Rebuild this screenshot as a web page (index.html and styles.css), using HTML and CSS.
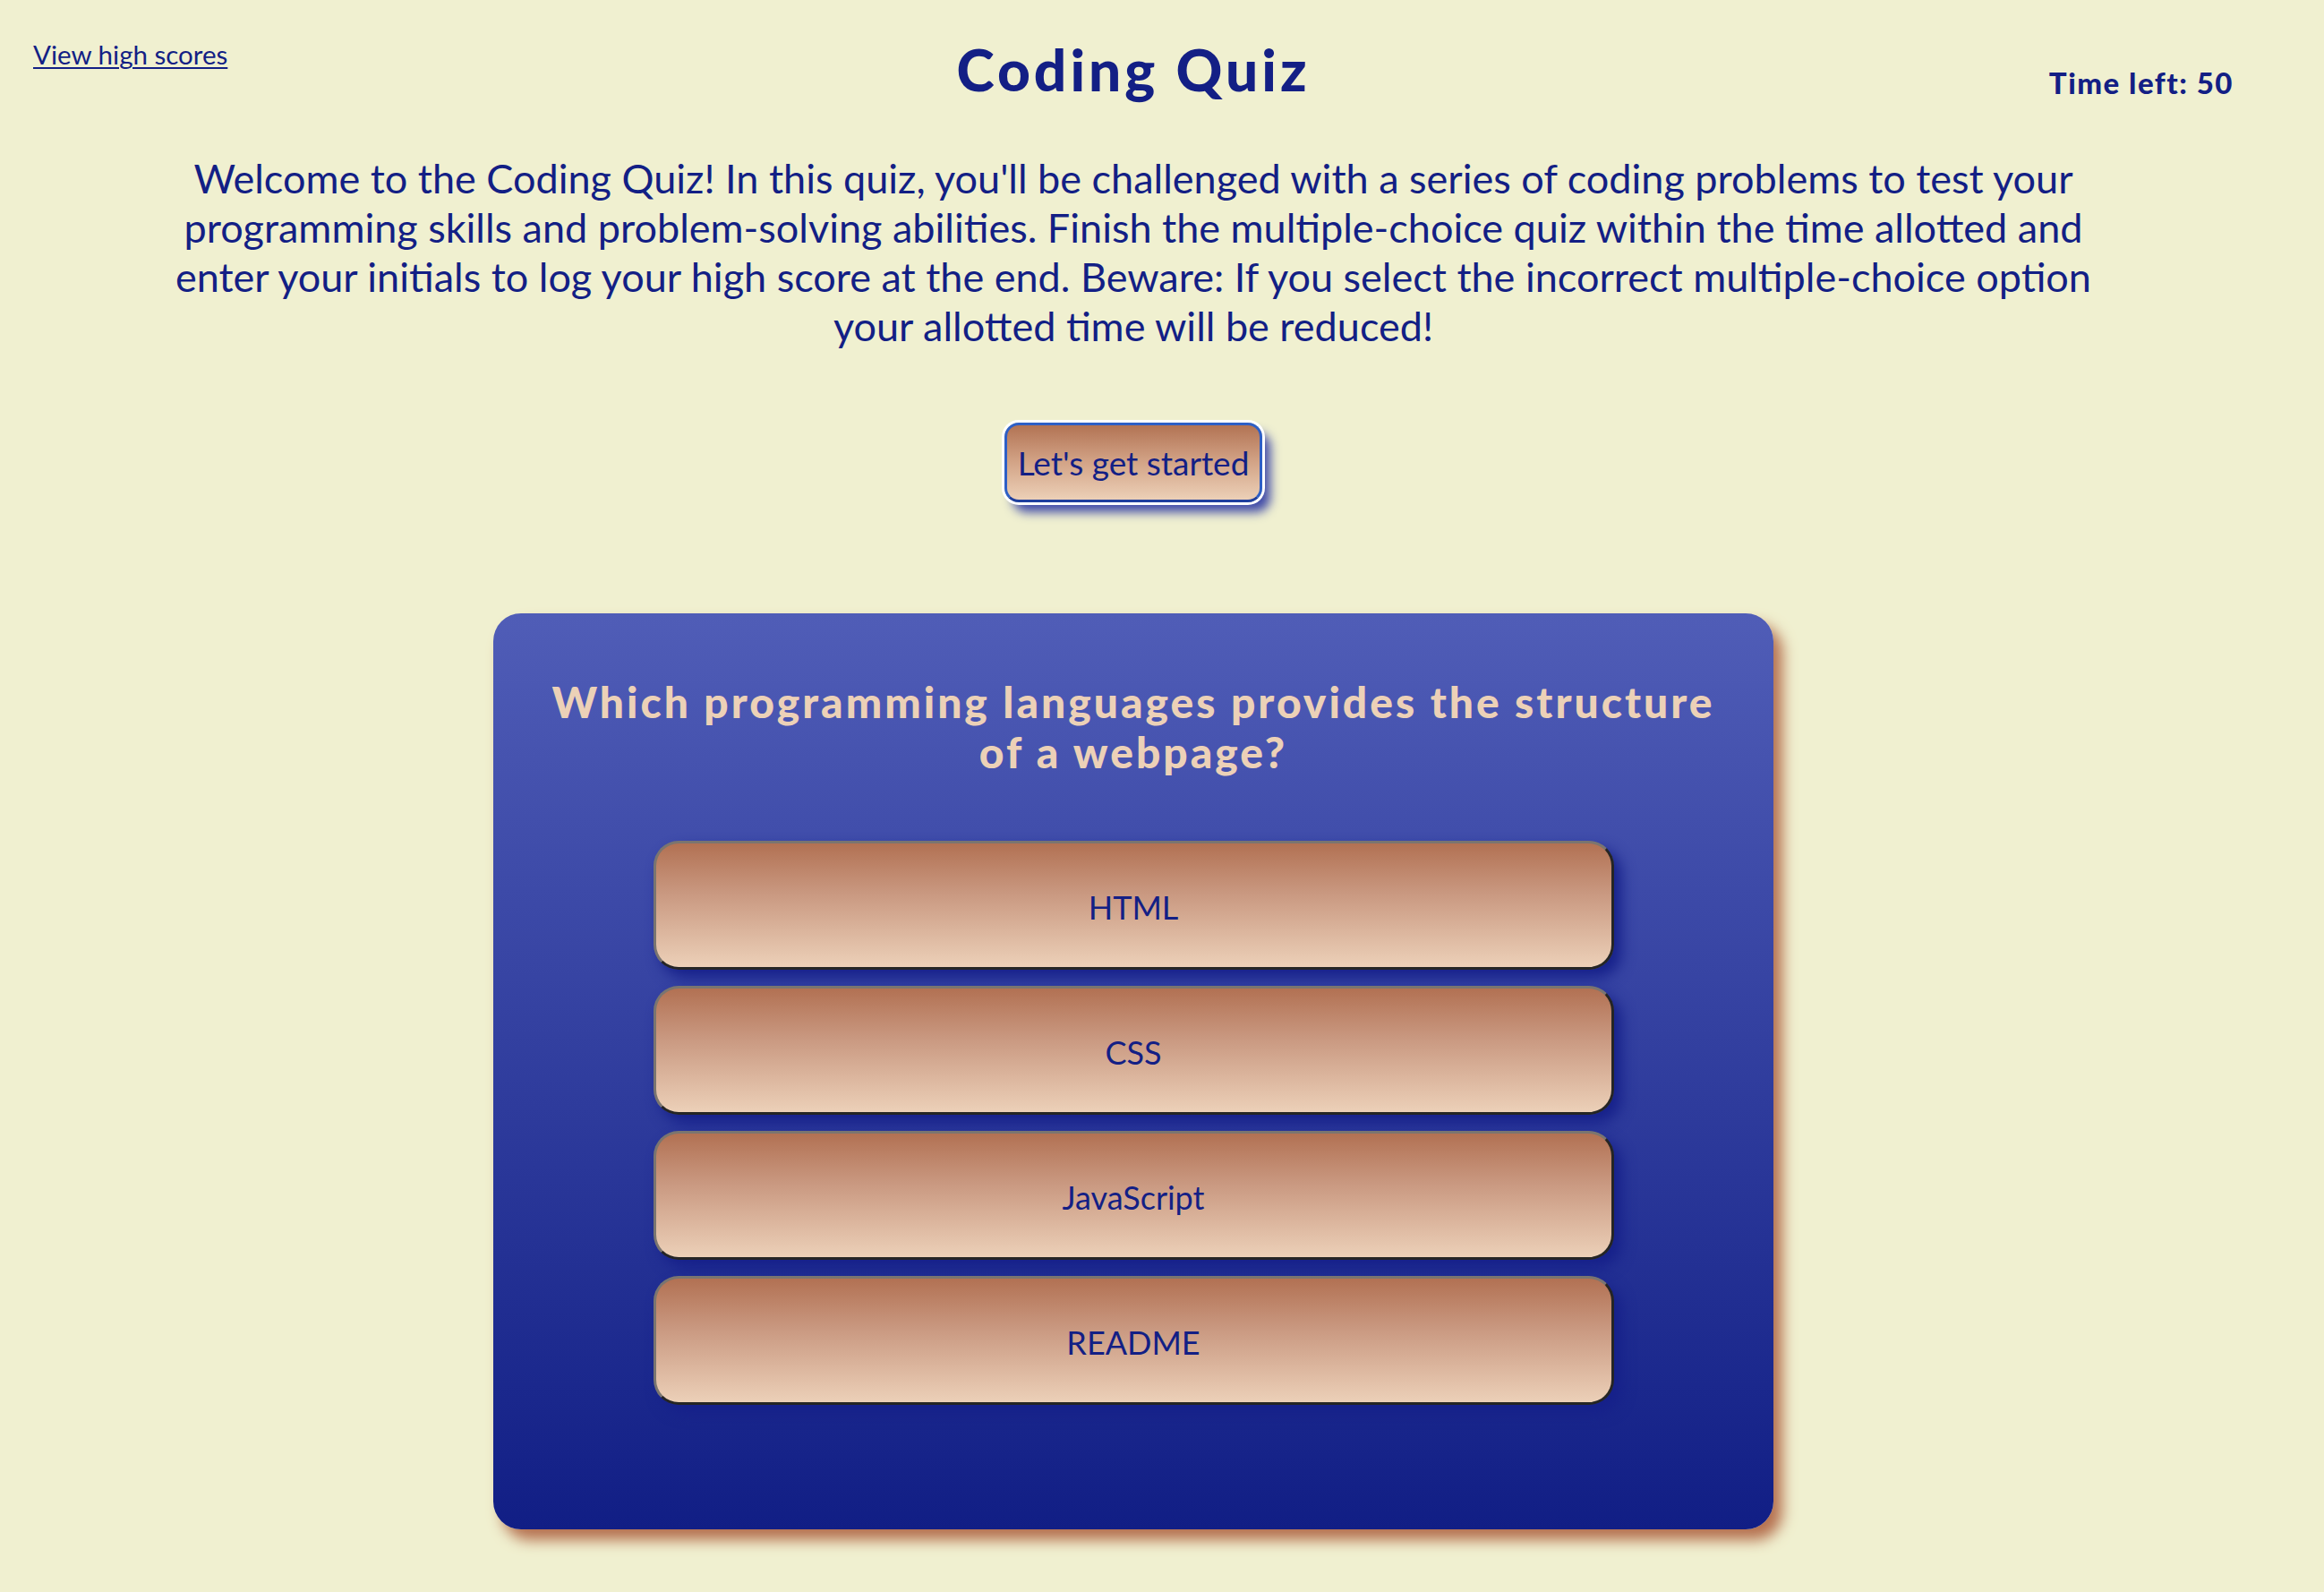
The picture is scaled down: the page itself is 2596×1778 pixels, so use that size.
FILE: index.html
```html
<!DOCTYPE html>
<html lang="en">
<head>
<meta charset="utf-8">
<title>Coding Quiz</title>
<link rel="stylesheet" href="styles.css">
</head>
<body>
<div class="page">
  <header class="header">
    <a class="scores-link" href="#">View high scores</a>
    <h1 class="title">Coding Quiz</h1>
    <div class="timer">Time left: 50</div>
  </header>
  <main class="main">
    <p class="intro">Welcome to the Coding Quiz! In this quiz, you'll be challenged with a series of coding problems to test your programming skills and problem-solving abilities. Finish the multiple-choice quiz within the time allotted and enter your initials to log your high score at the end. Beware: If you select the incorrect multiple-choice option your allotted time will be reduced!</p>
    <button class="start-btn" type="button">Let's get started</button>
    <section class="card">
      <h2 class="question">Which programming languages provides the structure of a webpage?</h2>
      <div class="answers">
        <button class="answer" type="button">HTML</button>
        <button class="answer" type="button">CSS</button>
        <button class="answer" type="button">JavaScript</button>
        <button class="answer" type="button">README</button>
      </div>
    </section>
  </main>
</div>
</body>
</html>
```

FILE: styles.css
```css
html, body {
  margin: 0;
  padding: 0;
}

body {
  background: #f0f0d0;
  color: #131f85;
  font-family: Lato, "Open Sans", sans-serif;
  min-height: 1778px;
}

.page {
  margin-right: 64px;
}

.header {
  display: grid;
  grid-template-columns: 1fr auto 1fr;
  align-items: start;
  padding: 0 37px;
}

.scores-link {
  justify-self: start;
  margin-top: 43px;
  font-size: 29.5px;
  line-height: 1.2;
  color: #131f85;
  text-decoration: underline;
  text-decoration-thickness: 2px;
  text-underline-offset: 3px;
}

.title {
  margin: 40px 0 0;
  font-size: 64px;
  line-height: 1.2;
  font-weight: 900;
  letter-spacing: 4px;
}

.timer {
  justify-self: end;
  margin-top: 73px;
  font-size: 33px;
  line-height: 1.2;
  font-weight: 900;
  letter-spacing: 1.5px;
}

.main {
  display: flex;
  flex-direction: column;
  align-items: center;
}

.intro {
  width: 2190px;
  margin: 55px 0 0;
  font-size: 45px;
  line-height: 55px;
  text-align: center;
}

.start-btn {
  margin-top: 80px;
  padding: 0 12px;
  height: 89px;
  font-family: inherit;
  font-size: 37px;
  color: #131f85;
  background: linear-gradient(#b27354, #d3a487 50%, #ecd0b7);
  border: 3px solid #2d5fc6;
  border-bottom-color: #1f3f9e;
  border-radius: 16px;
  box-shadow: 0 0 0 3px #ffffff, 9px 11px 12px #3f4aa8;
}

.card {
  width: 1430px;
  box-sizing: border-box;
  margin-top: 124px;
  padding: 71px 45px 139px;
  border-radius: 31px;
  background: linear-gradient(#505db7, #111e85);
  box-shadow: 10px 12px 16px #b5704f;
  text-align: center;
}

.question {
  margin: 0;
  font-size: 48px;
  line-height: 56px;
  font-weight: 900;
  letter-spacing: 3px;
  color: #ecd1b7;
}

.answers {
  margin-top: 71px;
  display: flex;
  flex-direction: column;
  align-items: center;
  gap: 18px;
}

.answer {
  width: 1073px;
  height: 144px;
  padding: 5px 0 0;
  font-family: inherit;
  font-size: 36px;
  color: #131f85;
  background: linear-gradient(#b27153, #c99880 40%, #ecd0b8);
  border: 3px solid;
  border-color: #7a7570 #252525 #252525 #7a7570;
  border-radius: 28px;
  box-shadow: 8px 9px 16px #16208a;
}
```
